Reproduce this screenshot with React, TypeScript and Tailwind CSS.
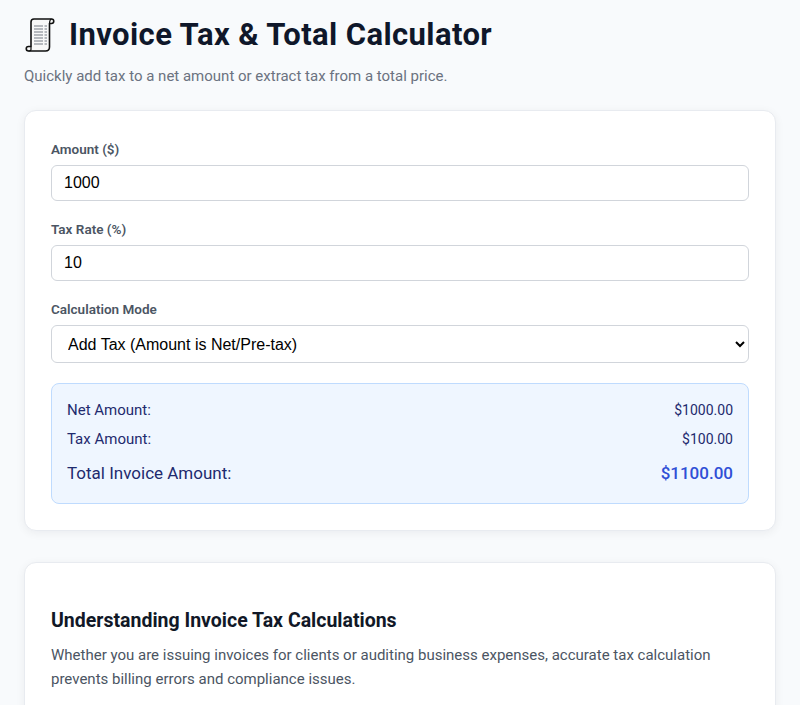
import React, { useState } from "react";

function ScrollIcon() {
  return (
    <svg width="32" height="36" viewBox="0 0 32 36" className="shrink-0">
      <path
        d="M10 2 H27.5 C30.5 2 30.5 6.5 27.5 6.5 H25.5 V30 C25.5 32.5 24 34 21.5 34 H4.5 C1.5 34 1.5 29.5 4.5 29.5 H7 V5 C7 3 8 2 10 2 Z"
        fill="#f8f8f8"
        stroke="#111"
        strokeWidth="1.6"
        strokeLinejoin="round"
      />
      <path d="M25.5 6.5 C25.5 4 26 2.5 27.5 2" fill="none" stroke="#111" strokeWidth="1.2" />
      <path d="M7 29.5 V32.5 C7 33.5 6 34 4.5 34" fill="none" stroke="#111" strokeWidth="1.2" />
      {[9, 12, 15, 18, 21, 24, 27].map((y) => (
        <g key={y}>
          <line x1="10" y1={y} x2="19" y2={y} stroke="#8a8f98" strokeWidth="1.2" />
          <line x1="20.5" y1={y} x2="23" y2={y} stroke="#8a8f98" strokeWidth="1.2" />
        </g>
      ))}
    </svg>
  );
}

export default function App() {
  const [amount, setAmount] = useState("1000");
  const [rate, setRate] = useState("10");
  const [mode, setMode] = useState("add");

  const a = parseFloat(amount) || 0;
  const r = parseFloat(rate) || 0;
  let net = a;
  let tax = (a * r) / 100;
  let total = a + tax;
  if (mode === "extract") {
    total = a;
    net = a / (1 + r / 100);
    tax = total - net;
  }

  return (
    <div className="min-h-screen bg-[#f8fafc] font-['Roboto','Segoe_UI',sans-serif] text-[#111827]">
      <div className="px-6 pt-[17px] pb-10">
        {/* Header */}
        <h1 className="flex items-center gap-[13px] text-[31px] leading-[36px] font-bold tracking-[0.4px] text-[#0f172a]">
          <ScrollIcon />
          <span>Invoice Tax &amp; Total Calculator</span>
        </h1>
        <p className="mt-[11px] text-[15px] leading-6 text-[#6b7280]">
          Quickly add tax to a net amount or extract tax from a total price.
        </p>

        {/* Calculator card */}
        <div className="mt-[22px] rounded-xl border border-[#e8ebf0] bg-white px-[26px] pt-[28px] pb-[26px] shadow-[0_2px_10px_rgba(15,23,42,0.06)]">
          <div className="mb-[18px]">
            <label className="mb-[6px] block text-[13.5px] leading-5 font-semibold text-[#4b5563]">Amount ($)</label>
            <input
              type="number"
              value={amount}
              onChange={(e) => setAmount(e.target.value)}
              className="block h-9 w-full rounded-md border border-[#d1d5db] bg-white px-3 font-['Liberation_Sans',Arial,sans-serif] text-base text-black outline-none"
            />
          </div>
          <div className="mb-[18px]">
            <label className="mb-[6px] block text-[13.5px] leading-5 font-semibold text-[#4b5563]">Tax Rate (%)</label>
            <input
              type="number"
              value={rate}
              onChange={(e) => setRate(e.target.value)}
              className="block h-9 w-full rounded-md border border-[#d1d5db] bg-white px-3 font-['Liberation_Sans',Arial,sans-serif] text-base text-black outline-none"
            />
          </div>
          <div>
            <label className="mb-[6px] block text-[13.5px] leading-5 font-semibold text-[#4b5563]">Calculation Mode</label>
            <select
              value={mode}
              onChange={(e) => setMode(e.target.value)}
              className="block h-[38px] w-full rounded-md border border-[#d1d5db] bg-white px-3 font-['Liberation_Sans',Arial,sans-serif] text-base text-black outline-none"
            >
              <option value="add">Add Tax (Amount is Net/Pre-tax)</option>
              <option value="extract">Extract Tax (Amount is Total/Gross)</option>
            </select>
          </div>

          {/* Results */}
          <div className="mt-5 rounded-lg border border-[#bfdbfe] bg-[#eff6ff] px-[15px] py-4 text-[#1e2a6e]">
            <div className="flex items-center justify-between text-[15px] leading-[21px]">
              <span>Net Amount:</span>
              <span className="text-[14px]">${net.toFixed(2)}</span>
            </div>
            <div className="mt-2 flex items-center justify-between text-[15px] leading-[21px]">
              <span>Tax Amount:</span>
              <span className="text-[14px]">${tax.toFixed(2)}</span>
            </div>
            <div className="mt-[10px] flex items-center justify-between text-[17px] leading-[27px]">
              <span>Total Invoice Amount:</span>
              <span className="text-[17px] font-medium text-[#2f4fd6]">${total.toFixed(2)}</span>
            </div>
          </div>
        </div>

        {/* Info card */}
        <div className="mt-[31px] rounded-xl border border-[#e8ebf0] bg-white px-[26px] pt-[44px] pb-8 shadow-[0_2px_10px_rgba(15,23,42,0.06)]">
          <h2 className="text-[19.5px] leading-7 font-bold text-[#111827]">Understanding Invoice Tax Calculations</h2>
          <p className="mt-2 text-[15px] leading-6 text-[#4b5563]">
            Whether you are issuing invoices for clients or auditing business expenses, accurate tax calculation
            prevents billing errors and compliance issues.
          </p>
        </div>
      </div>
    </div>
  );
}
